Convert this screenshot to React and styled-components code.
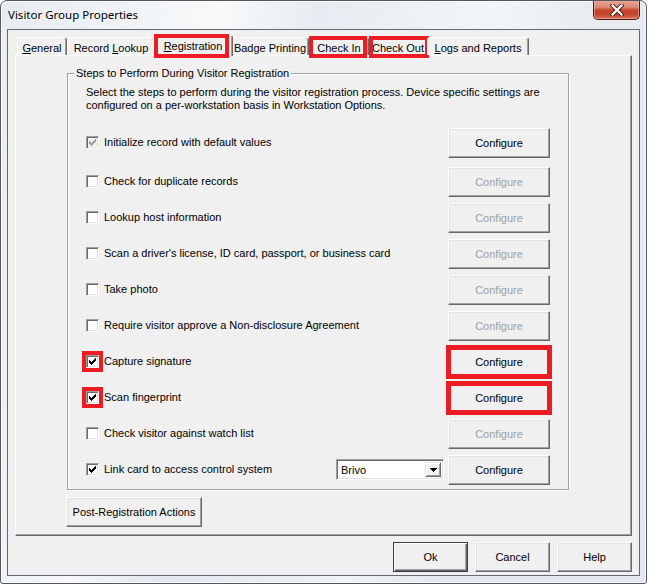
import React from 'react';
import styled, { createGlobalStyle, css } from 'styled-components';

const RED = '#ed1c24';

const Global = createGlobalStyle`
  html, body { margin: 0; padding: 0; background: #fff; }
  body { font-family: "Liberation Sans", Arial, sans-serif; font-size: 11px; color: #000; }
  * { box-sizing: border-box; }
`;

const Window = styled.div`
  width: 647px;
  height: 584px;
  display: flex;
  flex-direction: column;
  border: 1px solid #55595f;
  border-radius: 7px 7px 3px 3px;
  overflow: hidden;
  background:
    linear-gradient(105deg, rgba(255,255,255,0) 0%, rgba(255,255,255,0.7) 28%, rgba(255,255,255,0) 40%, rgba(255,255,255,0.5) 62%, rgba(255,255,255,0) 75%),
    linear-gradient(180deg, #e7ecf1 0%, #e2e8ee 100%);
  box-shadow: inset 1px 1px 0 rgba(255,255,255,0.8), inset -1px -1px 0 rgba(255,255,255,0.6);
`;

const TitleBar = styled.div`
  height: 28px;
  display: flex;
  align-items: flex-start;
  padding-left: 7px;
`;

const Title = styled.div`
  margin-top: 6px;
  font-family: "Noto Sans", "Open Sans", sans-serif;
  font-size: 11.5px;
  line-height: 16px;
  color: #000;
`;

const CloseButton = styled.div`
  margin-left: auto;
  margin-right: 6px;
  margin-top: -1px;
  width: 47px;
  height: 20px;
  border: 1px solid #4b1a12;
  border-top: none;
  border-radius: 0 0 5px 5px;
  background: linear-gradient(180deg, #e9a896 0%, #d98572 40%, #c8452c 52%, #c4462d 75%, #d9735a 100%);
  box-shadow: inset 0 0 0 1px rgba(255, 210, 200, 0.45);
  display: flex;
  align-items: center;
  justify-content: center;
`;

const Client = styled.div`
  flex: 1;
  margin: 0 6px 7px 6px;
  border: 1px solid #646a72;
  background: #f0f0f0;
  display: flex;
  flex-direction: column;
  padding: 5px 7px 3px 7px;
`;

const TabStrip = styled.div`
  position: relative;
  z-index: 2;
  height: 20px;
  display: flex;
  align-items: flex-end;
  padding-left: 2px;
`;

const markCss = css`
  &::after {
    content: '';
    position: absolute;
    left: ${(p) => p.$mark.l}px;
    right: ${(p) => p.$mark.r}px;
    top: ${(p) => p.$mark.t}px;
    bottom: ${(p) => p.$mark.b}px;
    border: 4px solid ${RED};
    pointer-events: none;
  }
`;

const Tab = styled.div`
  position: relative;
  width: ${(p) => p.$w}px;
  height: 18px;
  border: 1px solid;
  border-bottom: none;
  border-color: #fff #696969 transparent #fff;
  border-radius: 3px 3px 0 0;
  box-shadow: inset -1px 0 0 #a0a0a0;
  background: #f0f0f0;
  display: flex;
  align-items: center;
  justify-content: center;
  padding-top: 2px;
  white-space: pre;
  ${(p) =>
    p.$selected &&
    css`
      width: ${p.$w + 4}px;
      height: 21px;
      margin: 0 -2px -1px -2px;
      z-index: 3;
      padding-top: 0;
      padding-bottom: 1px;
    `}
  ${(p) => p.$mark && markCss}
`;

const TabLabel = styled.span`
  white-space: pre;
`;

const Panel = styled.div`
  flex: 1;
  border: 1px solid;
  border-color: #fff #696969 #696969 #fff;
  box-shadow: inset -1px -1px 0 #a0a0a0;
  padding: 11px 0 0 51px;
  display: flex;
  flex-direction: column;
  align-items: flex-start;
`;

const GroupBox = styled.fieldset`
  margin: 0;
  width: 502px;
  border: 1px solid #a0a0a0;
  box-shadow: 1px 1px 0 #fff, inset 1px 1px 0 #fff;
  padding: 6px 18px 4px 18px;
  min-inline-size: 0;
`;

const Legend = styled.legend`
  margin-left: -12px;
  padding: 0 2px;
  line-height: 13px;
  background: #f0f0f0;
`;

const Description = styled.p`
  margin: 0 0 16px 0;
  line-height: 13px;
  white-space: nowrap;
`;

const Steps = styled.div`
  display: flex;
  flex-direction: column;
  gap: 6px;
`;

const StepRow = styled.div`
  height: 30px;
  display: grid;
  grid-template-columns: 1fr auto auto;
  column-gap: 4px;
  align-items: center;
  margin-bottom: ${(p) => (p.$first ? 3 : 0)}px;
`;

const CheckLabel = styled.label`
  display: flex;
  align-items: center;
  gap: 5px;
  white-space: nowrap;
  margin-top: -2px;
`;

const Box = styled.span`
  position: relative;
  width: 13px;
  height: 13px;
  flex: none;
  border: 1px solid;
  border-color: #a0a0a0 #fff #fff #a0a0a0;
  box-shadow: inset 1px 1px 0 #696969, inset -1px -1px 0 #e3e3e3;
  background: ${(p) => (p.$disabled ? '#f0f0f0' : '#fff')};
  display: flex;
  align-items: center;
  justify-content: center;
  ${(p) =>
    p.$mark &&
    css`
      outline: 4px solid ${RED};
      outline-offset: 0;
    `}
`;

const Button = styled.button`
  width: ${(p) => p.$w}px;
  height: 30px;
  padding: 0;
  font-family: "Liberation Sans", Arial, sans-serif;
  font-size: 11px;
  color: ${(p) => (p.disabled ? '#a0a0a0' : '#000')};
  background: #f0f0f0;
  border: 1px solid;
  border-color: #fff #696969 #696969 #fff;
  box-shadow: inset -1px -1px 0 #a0a0a0, inset 1px 1px 0 #e3e3e3;
  border-radius: 0;
  white-space: nowrap;
  ${(p) =>
    p.$default &&
    css`
      border-color: #3c3c3c;
      box-shadow: inset 1px 1px 0 #fff, inset -1px -1px 0 #696969, inset -2px -2px 0 #a0a0a0;
    `}
  ${(p) =>
    p.$mark &&
    css`
      outline: 5px solid ${RED};
      outline-offset: -3px;
    `}
`;

const Combo = styled.div`
  width: 108px;
  height: 21px;
  border: 1px solid;
  border-color: #a0a0a0 #fff #fff #a0a0a0;
  box-shadow: inset 1px 1px 0 #696969, inset -1px -1px 0 #e3e3e3;
  background: #fff;
  display: flex;
  align-items: stretch;
  padding: 2px;
  margin-top: -1px;
`;

const ComboText = styled.span`
  flex: 1;
  padding-left: 2px;
  display: flex;
  align-items: center;
`;

const ComboArrow = styled.span`
  width: 16px;
  border: 1px solid;
  border-color: #e3e3e3 #696969 #696969 #e3e3e3;
  box-shadow: inset 1px 1px 0 #fff, inset -1px -1px 0 #a0a0a0;
  background: #f0f0f0;
  display: flex;
  align-items: center;
  justify-content: center;
`;

const PostButtonWrap = styled.div`
  margin: 7px 0 0 -1px;
`;

const Footer = styled.div`
  margin-top: 6px;
  display: flex;
  justify-content: flex-end;
  gap: 7px;
`;

const Check = ({ color = '#000' }) => (
  <svg width="7" height="7" viewBox="0 0 7 7" shapeRendering="crispEdges">
    <path
      d="M0 2h1v1h1v1h1v-1h1v-1h1v-1h1v-1h1v3h-1v1h-1v1h-1v1h-1v1h-1v-1h-1v-1h-1z"
      fill={color}
    />
  </svg>
);

const Mnemonic = ({ text, u }) =>
  u == null ? (
    <TabLabel>{text}</TabLabel>
  ) : (
    <TabLabel>
      {text.slice(0, u)}
      <u>{text[u]}</u>
      {text.slice(u + 1)}
    </TabLabel>
  );

const tabs = [
  { label: 'General', u: 0, w: 50 },
  { label: 'Record Lookup', u: 7, w: 88 },
  { label: 'Registration', u: 0, w: 76, selected: true, mark: { l: 0, r: 3, t: -2, b: -2 } },
  { label: 'Badge Printing', w: 78 },
  { label: 'Check In', w: 60, mark: { l: -1, r: 1, t: -2, b: -3 } },
  { label: 'Check Out', w: 58, mark: { l: -1, r: -3, t: -2, b: -3 } },
  { label: 'Logs and Reports', u: 0, w: 102 },
];

const steps = [
  { label: 'Initialize record with default values', checked: true, boxDisabled: true, enabled: true },
  { label: 'Check for duplicate records' },
  { label: 'Lookup host information' },
  { label: "Scan a driver's license, ID card, passport, or business card" },
  { label: 'Take photo' },
  { label: 'Require visitor approve a Non-disclosure Agreement' },
  { label: 'Capture signature', checked: true, mark: true, enabled: true, btnMark: true },
  { label: 'Scan fingerprint', checked: true, mark: true, enabled: true, btnMark: true },
  { label: 'Check visitor against watch list' },
  { label: 'Link card to access control system', checked: true, enabled: true, combo: 'Brivo' },
];

export default function App() {
  return (
    <>
      <Global />
      <Window>
        <TitleBar>
          <Title>Visitor Group Properties</Title>
          <CloseButton>
            <svg width="14" height="12" viewBox="0 0 14 12">
              <path d="M2.5 1.5 L11.5 10.5 M11.5 1.5 L2.5 10.5" stroke="#4a2620" strokeWidth="4.2" strokeLinecap="square" />
              <path d="M2.5 1.5 L11.5 10.5 M11.5 1.5 L2.5 10.5" stroke="#fff" strokeWidth="2.2" strokeLinecap="square" />
            </svg>
          </CloseButton>
        </TitleBar>
        <Client>
          <TabStrip>
            {tabs.map((t) => (
              <Tab key={t.label} $w={t.w} $selected={t.selected} $mark={t.mark}>
                <Mnemonic text={t.label} u={t.u} />
              </Tab>
            ))}
          </TabStrip>
          <Panel>
            <GroupBox>
              <Legend>Steps to Perform During Visitor Registration</Legend>
              <Description>
                Select the steps to perform during the visitor registration process. Device specific settings are
                <br />
                configured on a per-workstation basis in Workstation Options.
              </Description>
              <Steps>
                {steps.map((s, i) => (
                  <StepRow key={s.label} $first={i === 0}>
                    <CheckLabel>
                      <Box $disabled={s.boxDisabled} $mark={s.mark}>
                        {s.checked && <Check color={s.boxDisabled ? '#a0a0a0' : '#000'} />}
                      </Box>
                      {s.label}
                    </CheckLabel>
                    {s.combo ? (
                      <Combo>
                        <ComboText>{s.combo}</ComboText>
                        <ComboArrow>
                          <svg width="7" height="4" viewBox="0 0 7 4" shapeRendering="crispEdges">
                            <path d="M0 0h7l-3.5 4z" fill="#000" />
                          </svg>
                        </ComboArrow>
                      </Combo>
                    ) : (
                      <span />
                    )}
                    <Button $w={102} disabled={!s.enabled} $mark={s.btnMark}>
                      Configure
                    </Button>
                  </StepRow>
                ))}
              </Steps>
            </GroupBox>
            <PostButtonWrap>
              <Button $w={136}>Post-Registration Actions</Button>
            </PostButtonWrap>
          </Panel>
          <Footer>
            <Button $w={75} $default>Ok</Button>
            <Button $w={75}>Cancel</Button>
            <Button $w={75}>Help</Button>
          </Footer>
        </Client>
      </Window>
    </>
  );
}
